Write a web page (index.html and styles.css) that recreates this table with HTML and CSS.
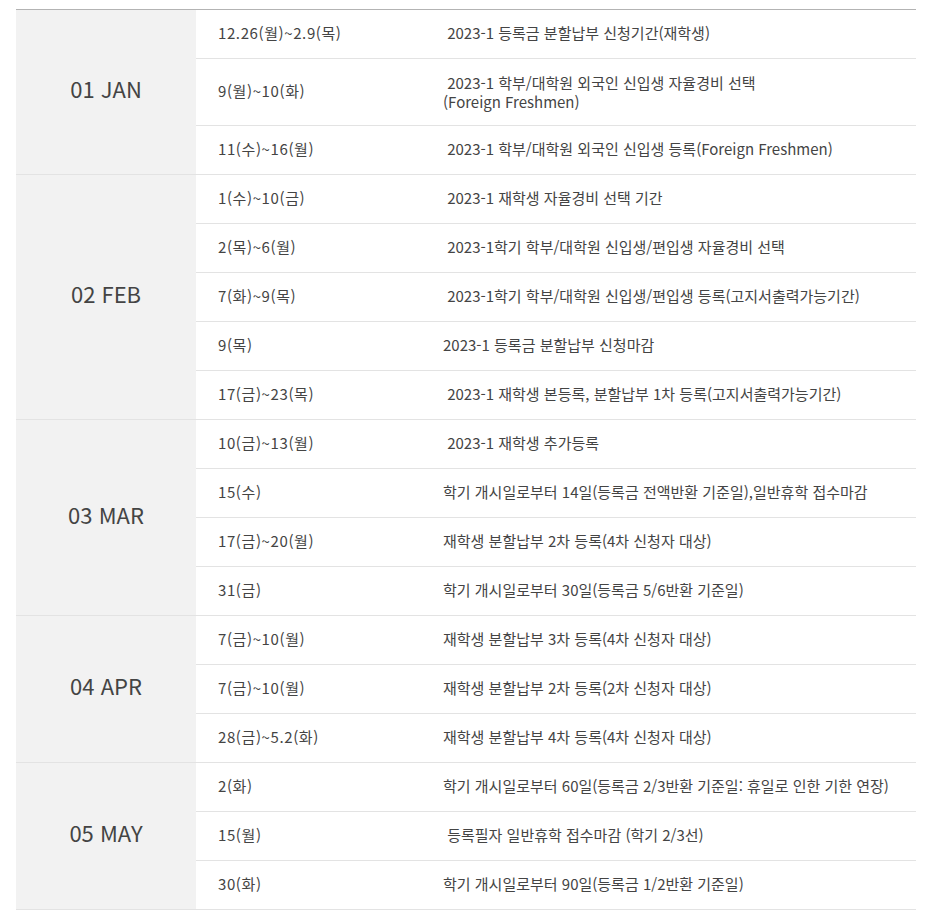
FILE: index.html
```html
<!DOCTYPE html>
<html lang="ko">
<head>
<meta charset="utf-8">
<link rel="stylesheet" href="styles.css">
</head>
<body>
<div class="wrap">
<table class="sched">
<colgroup><col class="c-month"><col class="c-date"><col class="c-desc"></colgroup>
<tbody>
<tr><th class="month" rowspan="3">01 JAN</th><td class="date">12.26(월)~2.9(목)</td><td class="desc">&nbsp;2023-1 등록금 분할납부 신청기간(재학생)</td></tr>
<tr><td class="date">9(월)~10(화)</td><td class="desc two">&nbsp;2023-1 학부/대학원 외국인 신입생 자율경비 선택<br>(Foreign Freshmen)</td></tr>
<tr><td class="date">11(수)~16(월)</td><td class="desc">&nbsp;2023-1 학부/대학원 외국인 신입생 등록(Foreign Freshmen)</td></tr>

<tr><th class="month" rowspan="5">02 FEB</th><td class="date">1(수)~10(금)</td><td class="desc">&nbsp;2023-1 재학생 자율경비 선택 기간</td></tr>
<tr><td class="date">2(목)~6(월)</td><td class="desc">&nbsp;2023-1학기 학부/대학원 신입생/편입생 자율경비 선택</td></tr>
<tr><td class="date">7(화)~9(목)</td><td class="desc">&nbsp;2023-1학기 학부/대학원 신입생/편입생 등록(고지서출력가능기간)</td></tr>
<tr><td class="date">9(목)</td><td class="desc">2023-1 등록금 분할납부 신청마감</td></tr>
<tr><td class="date">17(금)~23(목)</td><td class="desc">&nbsp;2023-1 재학생 본등록, 분할납부 1차 등록(고지서출력가능기간)</td></tr>

<tr><th class="month" rowspan="4">03 MAR</th><td class="date">10(금)~13(월)</td><td class="desc">&nbsp;2023-1 재학생 추가등록</td></tr>
<tr><td class="date">15(수)</td><td class="desc">학기 개시일로부터 14일(등록금 전액반환 기준일),일반휴학 접수마감</td></tr>
<tr><td class="date">17(금)~20(월)</td><td class="desc">재학생 분할납부 2차 등록(4차 신청자 대상)</td></tr>
<tr><td class="date">31(금)</td><td class="desc">학기 개시일로부터 30일(등록금 5/6반환 기준일)</td></tr>

<tr><th class="month" rowspan="3">04 APR</th><td class="date">7(금)~10(월)</td><td class="desc">재학생 분할납부 3차 등록(4차 신청자 대상)</td></tr>
<tr><td class="date">7(금)~10(월)</td><td class="desc">재학생 분할납부 2차 등록(2차 신청자 대상)</td></tr>
<tr><td class="date">28(금)~5.2(화)</td><td class="desc">재학생 분할납부 4차 등록(4차 신청자 대상)</td></tr>

<tr><th class="month" rowspan="3">05 MAY</th><td class="date">2(화)</td><td class="desc">학기 개시일로부터 60일(등록금 2/3반환 기준일: 휴일로 인한 기한 연장)</td></tr>
<tr><td class="date">15(월)</td><td class="desc">&nbsp;등록필자 일반휴학 접수마감 (학기 2/3선)</td></tr>
<tr><td class="date">30(화)</td><td class="desc">학기 개시일로부터 90일(등록금 1/2반환 기준일)</td></tr>
</tbody>
</table>
</div>
</body>
</html>
```
FILE: styles.css
```css
html, body {
  margin: 0;
  padding: 0;
  background: #fff;
}
body {
  font-family: "Noto Sans CJK KR", "Noto Sans", sans-serif;
  color: #444;
}
.wrap {
  padding: 9px 17px 0 16px;
}
.sched {
  width: 900px;
  border-collapse: collapse;
  table-layout: fixed;
  border-top: 1px solid #b3b3b3;
}
.c-month { width: 180px; }
.c-date { width: 225px; }
.c-desc { width: 495px; }
.sched th, .sched td {
  border-bottom: 1px solid #e3e3e3;
  padding: 14px 0 16px 22px;
  font-size: 15px;
  line-height: 18px;
  text-align: left;
  vertical-align: middle;
  font-weight: 400;
}
.sched td.date {
  letter-spacing: 0.6px;
}
.sched td.desc.two {
  padding-top: 14px;
  padding-bottom: 14px;
  line-height: 19px;
}
.sched th.month {
  background: #f2f2f2;
  padding: 0 0 8px 0;
  text-align: center;
  font-size: 22px;
  color: #444;
  letter-spacing: 0;
}
.sched td.desc {
  padding-left: 22px;
}
```
